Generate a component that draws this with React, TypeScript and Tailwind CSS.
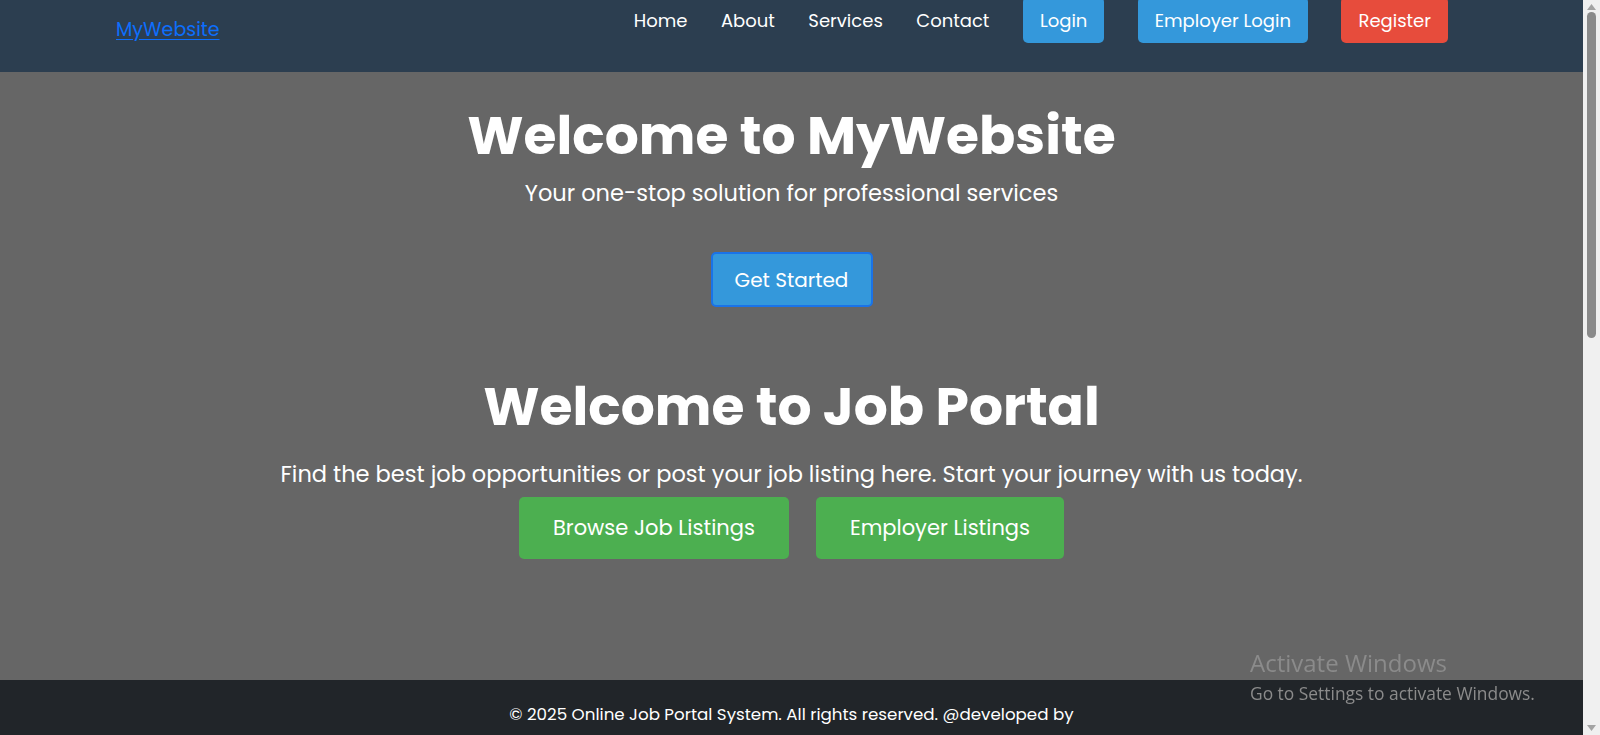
import React from 'react';

const navLinks = ['Home', 'About', 'Services', 'Contact'];

const NavButton: React.FC<{ label: string; color: string }> = ({ label, color }) => (
  <a href="#" className={`h-[46px] px-[17px] rounded-[5px] flex items-center text-white text-[18px] ${color}`}>
    {label}
  </a>
);

// browser scrollbar as it shows in the screenshot
const Scrollbar: React.FC = () => (
  <div className="fixed top-0 right-0 w-[17px] h-screen bg-[#f0f0f0] flex flex-col items-center">
    <svg width="9" height="6" viewBox="0 0 9 6" className="mt-[4px]">
      <path d="M4.5 0 L9 6 L0 6 Z" fill="#a3a3a3" />
    </svg>
    <div className="mt-[2px] w-[9px] h-[326px] rounded-full bg-[#8a8a8a]" />
    <div className="flex-1" />
    <svg width="9" height="6" viewBox="0 0 9 6" className="mb-[4px]">
      <path d="M0 0 L9 0 L4.5 6 Z" fill="#a3a3a3" />
    </svg>
  </div>
);

const App: React.FC = () => {
  return (
    <div className="mr-[17px] bg-[#666666] font-[Poppins,Inter,sans-serif]">
      <header className="h-[72px] bg-[#2c3e50] flex items-start justify-between pl-[116px] pr-[135px]">
        <a href="#" className="mt-[16px] text-[19px] leading-[28px] text-[#0d6efd] underline underline-offset-[3px]">
          MyWebsite
        </a>
        <nav className="flex items-center gap-[33.5px] -mt-[3px]">
          {navLinks.map((link) => (
            <a key={link} href="#" className="text-white text-[18px]">
              {link}
            </a>
          ))}
          <NavButton label="Login" color="bg-[#3498db]" />
          <NavButton label="Employer Login" color="bg-[#3498db]" />
          <NavButton label="Register" color="bg-[#e74c3c]" />
        </nav>
      </header>

      <main className="h-[608px] flex flex-col items-center text-white">
        <h1 className="mt-[30px] text-[53.5px] leading-[67px] font-bold">Welcome to MyWebsite</h1>
        <p className="mt-[8px] text-[22.5px] leading-[33px]">Your one-stop solution for professional services</p>
        <a href="#" className="mt-[42px] w-[162px] h-[55px] rounded-[5px] border-2 border-[#1a73e8] bg-[#3498db] flex items-center justify-center text-[20px]">
          Get Started
        </a>

        <h2 className="mt-[66px] text-[53.5px] leading-[67px] font-bold">Welcome to Job Portal</h2>
        <p className="mt-[18px] text-[22.5px] leading-[33px]">
          Find the best job opportunities or post your job listing here. Start your journey with us today.
        </p>
        <div className="mt-[6px] flex gap-[27px]">
          <a href="#" className="h-[62px] px-[34px] rounded-[5px] bg-[#4caf50] flex items-center text-[21px]">
            Browse Job Listings
          </a>
          <a href="#" className="h-[62px] px-[34px] rounded-[5px] bg-[#4caf50] flex items-center text-[21px]">
            Employer Listings
          </a>
        </div>
      </main>

      <footer className="bg-[#212529] pt-[21px] pb-[30px] text-center text-white text-[16.7px] leading-[26px]">
        © 2025 Online Job Portal System. All rights reserved. @developed by
      </footer>

      <div className="fixed left-[1250px] top-[648px] text-[#8b8b8b] font-['Open_Sans',sans-serif] pointer-events-none">
        <div className="text-[24px] leading-[30px]">Activate Windows</div>
        <div className="text-[17.4px] leading-[22px] mt-[4px]">Go to Settings to activate Windows.</div>
      </div>

      <Scrollbar />
    </div>
  );
};

export default App;
